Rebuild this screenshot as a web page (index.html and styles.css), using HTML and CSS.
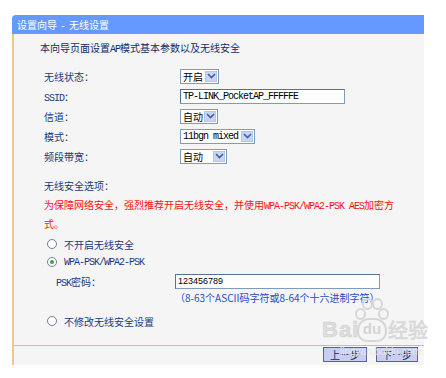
FILE: index.html
```html
<!DOCTYPE html>
<html>
<head>
<meta charset="utf-8">
<link rel="stylesheet" href="styles.css">
</head>
<body>
<div class="page">
  <div class="panel">
    <div class="hdr">设置向导 - 无线设置</div>
    <div class="body">
      <p class="intro">本向导页面设置<span class="m">AP</span>模式基本参数以及无线安全</p>
      <div class="form">
        <div class="row"><span class="lbl">无线状态：</span><span class="sel w39"><span class="v">开启</span><span class="arr"><svg width="9" height="6" viewBox="0 0 9 6"><path d="M1 1 L4.5 4.5 L8 1" fill="none" stroke="#4a5f8f" stroke-width="1.6"/></svg></span></span></div>
        <div class="row"><span class="lbl"><span class="m">SSID</span>：</span><span class="inp ssid"><span class="m">TP-LINK_PocketAP_FFFFFE</span></span></div>
        <div class="row"><span class="lbl">信道：</span><span class="sel w38"><span class="v">自动</span><span class="arr"><svg width="9" height="6" viewBox="0 0 9 6"><path d="M1 1 L4.5 4.5 L8 1" fill="none" stroke="#4a5f8f" stroke-width="1.6"/></svg></span></span></div>
        <div class="row"><span class="lbl">模式：</span><span class="sel w75"><span class="v m">11bgn mixed</span><span class="arr"><svg width="9" height="6" viewBox="0 0 9 6"><path d="M1 1 L4.5 4.5 L8 1" fill="none" stroke="#4a5f8f" stroke-width="1.6"/></svg></span></span></div>
        <div class="row"><span class="lbl">频段带宽：</span><span class="sel w47"><span class="v">自动</span><span class="arr"><svg width="9" height="6" viewBox="0 0 9 6"><path d="M1 1 L4.5 4.5 L8 1" fill="none" stroke="#4a5f8f" stroke-width="1.6"/></svg></span></span></div>
      </div>
      <div class="sec">无线安全选项：</div>
      <p class="warn"><span>为保障网络安全，强烈推荐开启无线安全，并使用</span><span class="m">WPA-PSK/WPA2-PSK AES</span><span>加密方</span><span>式。</span></p>
      <div class="radio r1"><span class="rb"></span>不开启无线安全</div>
      <div class="radio"><span class="rb on"></span><span class="m">WPA-PSK/WPA2-PSK</span></div>
      <div class="psk"><span class="lbl2"><span class="m">PSK</span>密码：</span><span class="inp pw">123456789</span></div>
      <div class="help">（8-63个ASCII码字符或8-64个十六进制字符）</div>
      <div class="radio r3"><span class="rb"></span>不修改无线安全设置</div>
      <div class="foot">
        <button class="btn b1">上一步</button>
        <button class="btn b2">下一步</button>
      </div>
    </div>
  </div>
  <div class="wm">
    <span class="wm-bai">Bai</span>
    <span class="wm-paw">
      <span class="toe t1"></span><span class="toe t2"></span><span class="toe t3"></span><span class="toe t4"></span>
      <span class="wm-du">du</span>
    </span>
    <span class="wm-jy">经验</span>
    <span class="wm-url">jingyan.baidu.com</span>
  </div>
</div>
</body>
</html>
```

FILE: styles.css
```css
html, body {
  margin: 0;
  background: #ffffff;
}
body {
  font-family: "Noto Sans CJK SC", sans-serif;
  font-size: 10px;
}
.page {
  position: relative;
  padding: 15px 0 0 12px;
  height: 363px;
}
.panel {
  width: 412px;
}
.hdr {
  height: 19px;
  line-height: 19px;
  background: #6699ff;
  color: #ffffff;
  padding-left: 5px;
  border-radius: 4px 0 0 0;
  word-spacing: 2px;
}
.body {
  height: 331px;
  background: #f5f5f5;
  border-left: 2px solid #f3c48f;
  display: flex;
  flex-direction: column;
  color: #1a3a7c;
}
.m {
  font-family: "Liberation Mono", "DejaVu Sans Mono", monospace;
  font-size: 10px;
  letter-spacing: -1px;
}
.intro {
  margin: 4px 0 0 26px;
  line-height: 20px;
  color: #112c68;
}
.form {
  margin-top: 6px;
  padding-left: 30px;
}
.row {
  height: 20px;
  display: flex;
  align-items: center;
}
.lbl {
  width: 136px;
}
.sel {
  box-sizing: border-box;
  height: 15px;
  border: 1px solid #7f9db9;
  background: #ffffff;
  display: flex;
  align-items: center;
  justify-content: space-between;
  padding-left: 2px;
  color: #000000;
}
.sel .v {
  line-height: 13px;
}
.w39 { width: 39px; }
.w38 { width: 38px; }
.w75 { width: 75px; }
.w47 { width: 47px; }
.arr {
  box-sizing: border-box;
  width: 12px;
  height: 11px;
  margin-right: 1px;
  background: #c6d6fb;
  border: 1px solid #b3c6ef;
  display: flex;
  align-items: center;
  justify-content: center;
}
.inp {
  box-sizing: border-box;
  height: 15px;
  border: 1px solid #7f9db9;
  border-top-color: #5a6f94;
  border-left-color: #5a6f94;
  background: #ffffff;
  color: #000000;
  padding-left: 2px;
  display: flex;
  align-items: center;
}
.ssid {
  width: 165px;
}
.pw {
  width: 205px;
  font-family: "Liberation Sans", sans-serif;
  font-size: 9px;
}
.sec {
  margin-top: 10px;
  padding-left: 30px;
  line-height: 20px;
}
.warn {
  margin: 0 0 0 30px;
  width: 356px;
  line-height: 17px;
  color: #ff1010;
}
.radio {
  padding-left: 33px;
  height: 18px;
  display: flex;
  align-items: center;
}
.r1 {
  margin-top: 3px;
}
.r3 {
  margin-top: 7px;
}
.rb {
  box-sizing: border-box;
  width: 10px;
  height: 10px;
  border: 1px solid #6d7f98;
  border-radius: 50%;
  background: #ffffff;
  margin-right: 7px;
  display: flex;
  align-items: center;
  justify-content: center;
}
.rb.on::after {
  content: "";
  width: 4px;
  height: 4px;
  border-radius: 50%;
  background: #3ea13e;
}
.psk {
  height: 20px;
  display: flex;
  align-items: center;
  padding-left: 42px;
}
.lbl2 {
  width: 119px;
}
.help {
  padding-left: 161px;
  line-height: 14px;
  color: #1f4cc4;
}
.foot {
  margin-top: auto;
  height: 20px;
  box-sizing: border-box;
  border-top: 1px solid #f0b46e;
  display: flex;
  justify-content: flex-end;
  align-items: flex-start;
  gap: 9px;
  padding: 1px 6px 0 0;
}
.btn {
  box-sizing: border-box;
  height: 15px;
  padding: 0;
  margin: 0;
  border: 1px solid #5a629c;
  background: #c9cdf2;
  color: #102a6a;
  font-family: "Noto Sans CJK SC", sans-serif;
  font-size: 10px;
  line-height: 13px;
}
.b1 { width: 44px; }
.b2 { width: 42px; }

/* Baidu watermark overlay */
.wm {
  position: absolute;
  left: 322px;
  top: 296px;
  width: 124px;
  height: 66px;
  pointer-events: none;
  color: #d9d9d9;
}
.wm-bai {
  position: absolute;
  left: 0;
  top: 22px;
  font-family: "Liberation Sans", sans-serif;
  font-weight: bold;
  font-size: 22px;
  line-height: 24px;
  letter-spacing: 1px;
  color: #dedede;
  -webkit-text-stroke: 0.5px #cccccc;
}
.wm-paw {
  position: absolute;
  left: 33px;
  top: 2px;
  width: 30px;
  height: 44px;
}
.toe {
  position: absolute;
  width: 7px;
  height: 8px;
  border: 2px solid #d6d6d6;
  border-radius: 50%;
}
.t1 { left: 0; top: 10px; }
.t2 { left: 7px; top: 0; }
.t3 { left: 17px; top: 0; }
.t4 { left: 23px; top: 10px; }
.wm-du {
  position: absolute;
  left: 2px;
  top: 20px;
  width: 26px;
  height: 20px;
  border: 2px solid #d6d6d6;
  border-radius: 12px 12px 10px 10px;
  font-family: "Liberation Sans", sans-serif;
  font-weight: bold;
  font-size: 15px;
  line-height: 18px;
  text-align: center;
  color: #d3d3d3;
}
.wm-jy {
  position: absolute;
  left: 66px;
  top: 22px;
  font-size: 20px;
  line-height: 24px;
  color: #e0e0e0;
  -webkit-text-stroke: 0.5px #cfcfcf;
}
.wm-url {
  position: absolute;
  left: 18px;
  top: 50px;
  font-family: "Liberation Sans", sans-serif;
  font-size: 10px;
  line-height: 12px;
  color: #e6e6e6;
}
```
